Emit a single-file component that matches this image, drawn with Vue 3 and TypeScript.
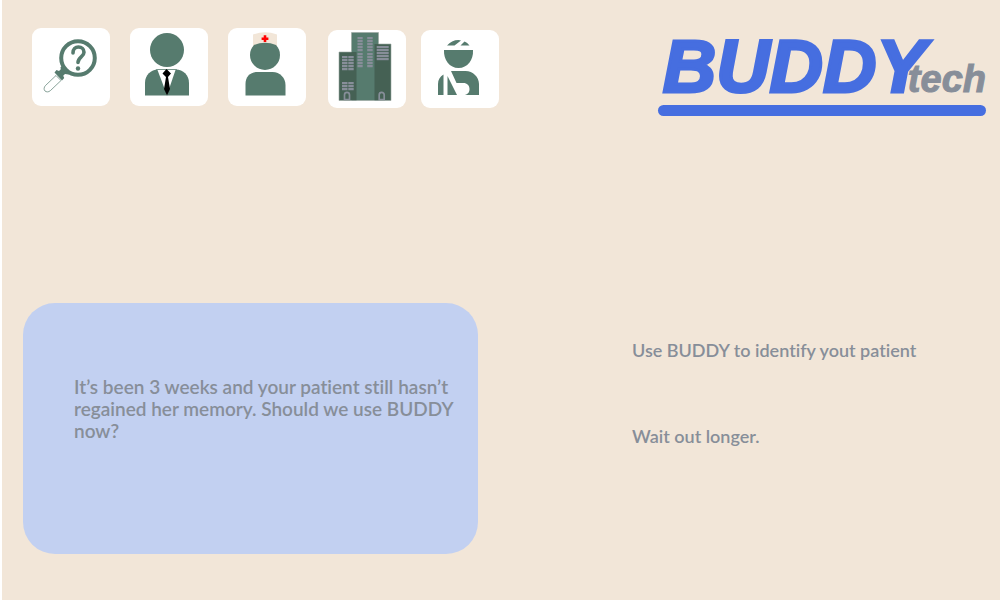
<script setup lang="ts">
import { ref } from 'vue'

const question: string =
  'It’s been 3 weeks and your patient still hasn’t regained her memory. Should we use BUDDY now?'
const choices: string[] = ['Use BUDDY to identify yout patient', 'Wait out longer.']
const selected = ref<number | null>(null)

const leftWindows: number[] = [26, 29, 32, 35, 38, 52, 55, 58]
const towerWindows: number[] = [7, 10, 13, 16, 19, 23, 26, 29, 32, 35]
const rightWindows: number[] = [16, 19, 22, 25, 28]
</script>

<template>
  <div class="page">
    <header class="top">
      <nav class="tools" aria-label="Sections">
        <div class="group">
          <button type="button" class="tile" aria-label="Investigate">
            <svg viewBox="0 0 78 78">
              <circle cx="46" cy="30" r="16.8" fill="none" stroke="#567b6e" stroke-width="4" />
              <path d="M41 25c0-4 2.400-6 5.400-6 3.400 0 5.600 2.200 5.600 5.200 0 4.700-6 4.700-6 10.300" fill="none" stroke="#567b6e" stroke-width="3.600" stroke-linecap="round" />
              <circle cx="46" cy="40.500" r="2.200" fill="#567b6e" />
              <path d="M31 37l8 8.500-2.500 1-3.500-.5-1.800 1.800 1 2.200-2.200 2.500-7.500-8 2-2.500 2.500 1 1.800-1.800-.3-2z" fill="#567b6e" />
              <path d="M24 47.500l5 5-10.500 10c-2 2-4.500 1.500-5.500.5-1.500-1.500-1-4 .5-5.500z" fill="#fff" stroke="#567b6e" stroke-width=".7" />
            </svg>
          </button>
          <button type="button" class="tile" aria-label="Detective">
            <svg viewBox="0 0 78 78">
              <circle cx="37" cy="22" r="17" fill="#567b6e" />
              <path d="M15 67.500V55c0-8 6-13.500 13-13.500h18C53 41.500 59 47 59 55v12.500z" fill="#567b6e" />
              <path d="M27.500 42h18L37 67z" fill="#fff" />
              <path d="M26 41.500h21" stroke="#567b6e" stroke-width=".6" />
              <path d="M36.500 41l4.500 4.500-3 3.500 2 12-3 6.500-3-6.500 2-12-3.500-3.500z" fill="#000" />
            </svg>
          </button>
          <button type="button" class="tile" aria-label="Nurse">
            <svg viewBox="0 0 78 78">
              <path d="M25 6.500Q37 2 49 6.500V19H25z" fill="#f2e6d8" />
              <path d="M26 17q11-4.500 22 0c2.500 3 4 5.500 4 10a15 15 0 0 1-30 0c0-4.500 1.500-7 4-10z" fill="#567b6e" />
              <path d="M37 7.300v6.800M33.600 10.700h6.800" stroke="#f00" stroke-width="2.600" />
              <path d="M17.500 67.500V56c0-7.500 5-12 12-12h15c7.500 0 13 6 13 13v10.500z" fill="#567b6e" />
            </svg>
          </button>
        </div>
        <div class="group lowered">
          <button type="button" class="tile" aria-label="Hospital">
            <svg viewBox="0 0 78 78">
              <path d="M23.500 2.500h27v68h-27z" fill="#567b6e" />
              <path d="M11 22h17.500v48.500H11zM46.500 14h16.500v56.500H46.500z" fill="#456154" />
              <path d="M11 70.500V22h12.500V2.500h27V14H63v56.500z" fill="none" stroke="#9ca8a3" stroke-width=".6" />
              <g fill="#878e99">
                <path v-for="y in leftWindows" :key="'l' + y" :d="`M14 ${y}h5.500v2.200H14zM20.300 ${y}h5.400v2.200h-5.400z`" />
                <path v-for="y in towerWindows" :key="'t' + y" :d="`M29.500 ${y}h5.200v2.200h-5.200zM39.200 ${y}h5.500v2.200h-5.500z`" />
                <path v-for="y in rightWindows" :key="'r' + y" :d="`M48.700 ${y}h12v2.200h-12z`" />
              </g>
              <path d="M16.500 69.500v-4.500a2.500 2.600 0 0 1 5 0v4.500zM51.200 69.500v-4.500a2.500 2.600 0 0 1 5 0v4.500z" fill="#456154" stroke="#878e99" stroke-width="1.700" />
            </svg>
          </button>
          <button type="button" class="tile" aria-label="Patient">
            <svg viewBox="0 0 78 78">
              <path d="M26 15.500c3-3.500 7-5.500 11.500-5.500l2.500.4-6.500 5.100zM43.500 11.500c2 .8 3.500 2 5 4h-9z" fill="#567b6e" />
              <path d="M23 20h29c.6 10-5.500 18-14.500 18S22.500 30 23 20z" fill="#567b6e" />
              <path d="M17 65V54c0-4 2-7.500 5.500-9.500V65zM26.500 65V46L36 65z" fill="#567b6e" />
              <path d="M30 41h14.500C52 41 58 47 58 54v11H44c3.500-1 4.500-3.300 4.500-6 0-3.500-2.500-6-6-6h-7z" fill="#567b6e" />
            </svg>
          </button>
        </div>
      </nav>

      <h1 class="brand">
        <span class="name">BUDDY</span><span class="suffix">tech</span>
      </h1>
    </header>

    <main class="scene">
      <section class="prompt">
        <p class="text question">{{ question }}</p>
      </section>
      <div class="choices">
        <button
          v-for="(choice, i) in choices"
          :key="choice"
          type="button"
          class="choice text"
          :aria-pressed="selected === i"
          @click="selected = i"
        >
          {{ choice }}
        </button>
      </div>
    </main>
  </div>
</template>

<style>
body {
  background: #fff;
}
</style>

<style scoped>
.page {
  box-sizing: border-box;
  min-height: calc(100vh - 1px);
  margin-left: 2px;
  padding: 28px 14px 46px 21px;
  background: #f2e6d8;
}

.top {
  display: flex;
  justify-content: space-between;
  align-items: flex-start;
}

.tools {
  display: flex;
  gap: 22px;
  padding-left: 9px;
}

.group {
  display: flex;
  gap: 20px;
}

.lowered {
  gap: 15px;
  padding-top: 2px;
}

.tile {
  width: 78px;
  height: 78px;
  padding: 0;
  border: 0;
  border-radius: 9px;
  background: #fff;
  cursor: pointer;
}

.tile svg {
  display: block;
  width: 100%;
}

.brand {
  margin: 0;
  font: italic bold 74px/77px "Liberation Sans", Arial, sans-serif;
  white-space: nowrap;
  color: #466ee0;
}

.brand::after {
  content: "";
  display: block;
  height: 11px;
  border-radius: 6px;
  background: #466ee0;
}

.name {
  margin-left: 5px;
  -webkit-text-stroke: 3px #466ee0;
}

.suffix {
  margin-left: -18px;
  font-size: 38px;
  line-height: 38px;
  color: #878e99;
  -webkit-text-stroke: 1px #878e99;
}

.scene {
  display: grid;
  grid-template-columns: 455fr 508fr;
  margin-top: 187px;
}

.prompt {
  padding: 73px 16px 112px 51px;
  border-radius: 32px;
  background: #c2d0f1;
}

.text {
  margin: 0;
  font: 600 18px/22px Lato, "Open Sans", sans-serif;
  font-variant-ligatures: none;
  color: #878e99;
}

.question {
  font-size: 19px;
}

.choices {
  display: flex;
  flex-direction: column;
  align-items: flex-start;
  gap: 64px;
  padding: 36px 0 0 154px;
}

.choice {
  padding: 0;
  border: 0;
  background: none;
  text-align: left;
  cursor: pointer;
}
</style>
